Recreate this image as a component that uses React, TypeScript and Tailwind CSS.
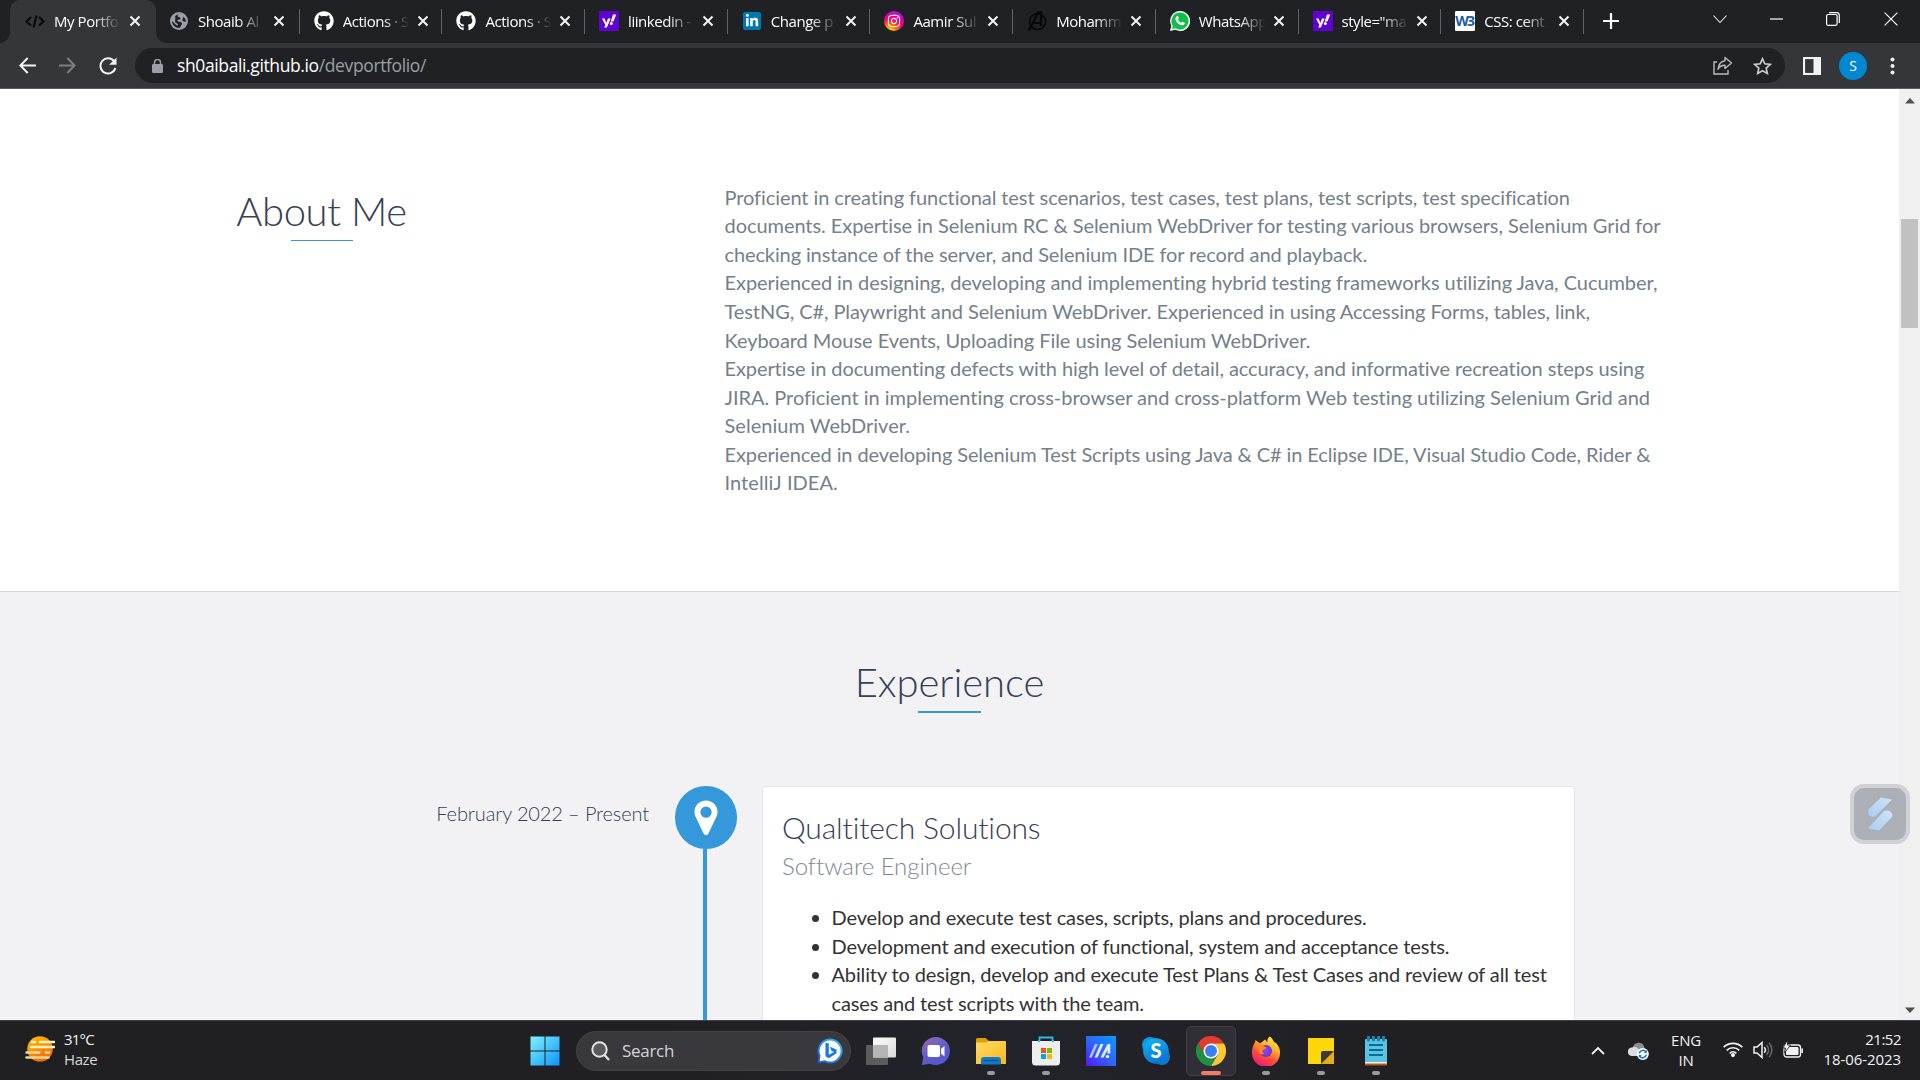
import React from "react";
import { FaGithub, FaInstagram, FaLinkedinIn } from "react-icons/fa";

const CloseX = () => (
  <svg width="12" height="12" viewBox="0 0 12 12" className="shrink-0">
    <path d="M1.5 1.5l9 9M10.5 1.5l-9 9" stroke="#f1f3f4" strokeWidth="2" />
  </svg>
);

const CodeFav = () => (
  <svg width="20" height="20" viewBox="0 0 20 20" fill="none" stroke="#0b0b0c" strokeWidth="2.200">
    <path d="M6 6L1.5 10.5 6 14.500M14 6l4.500 4.500L14 14.500M11.500 4.500l-3 12" />
  </svg>
);

const GlobeFav = () => (
  <svg width="18" height="18" viewBox="0 0 18 18">
    <circle cx="9" cy="9" r="9" fill="#9aa0a6" />
    <path d="M9.500 2c-2 .6-2.300 1.600-1.700 2.400.7.900 2.200.6 2.700 1.700.4 1.200-1 1.700-2.200 1.700-1.400 0-1.200 1.400-.3 1.700 1.400.4 3.400.2 3.900 1.600.5 1.500-.9 2.300-1.300 3.400-.2.700-.7 1.500-1.400 1.500-3.900-.1-7.200-3.100-7.200-7l4.500 4.300c.5.500 1.600.2 1.500-.7-.2-1.400-2.300-1.400-2.800-2.700C4.700 8 6 6 5 4.500 6.100 3 7.800 2 9.500 2zM13 4.500c1.700 1 3 3 2.900 5-1.300.4-2.900 0-3.500-1.300-.5-1.300 1.500-2.200.6-3.700z" fill="#202124" />
  </svg>
);

const YahooFav = () => (
  <svg width="20" height="20" viewBox="0 0 20 20">
    <rect width="20" height="20" fill="#6001d2" />
    <path d="M3 7.500h2.600L7.300 12 9 7.500h2.600L7.900 16.500H5.300l1.100-2.400z" fill="#fff" />
    <path d="M14 3.500h3.200l-2.700 7H11.700z" fill="#fff" />
    <circle cx="12.300" cy="12.600" r="1.500" fill="#fff" />
  </svg>
);

const LinkedinFav = () => (
  <div className="flex size-[18px] items-center justify-center rounded-[2px] bg-[#0077b5]">
    <FaLinkedinIn size={14} color="#fff" />
  </div>
);

const InstaFav = () => (
  <div className="flex size-5 items-center justify-center rounded-full bg-[radial-gradient(circle_at_28%_105%,#ffd600_8%,#ff7a00_28%,#ff0169_50%,#d300c5_72%,#7638fa_100%)]">
    <FaInstagram size={14} color="#fff" />
  </div>
);

const AvengersFav = () => (
  <svg width="20" height="20" viewBox="0 0 20 20" fill="none" stroke="#08080a">
    <circle cx="10.500" cy="10.500" r="8" strokeWidth="1.700" />
    <path d="M2 19.500L11 1.500h3V15" strokeWidth="2.400" />
    <path d="M7 12h8" strokeWidth="2" />
  </svg>
);

const WhatsappFav = () => (
  <svg width="20" height="20" viewBox="0 0 20 20">
    <path d="M10 0a10 10 0 11-4.600 18.800L0 20l1.300-5.200A10 10 0 0110 0z" fill="#f5f5f5" />
    <path d="M10 1.500A8.500 8.500 0 112.900 14.700l0 0-.9 3.400 3.500-.9A8.500 8.500 0 0110 1.500z" fill="#0ebd4a" />
    <path d="M6.700 5.300c.5-.5 1.200-.4 1.400.1l.7 1.600c.2.500-.4 1-.8 1.400.7 1.500 1.900 2.600 3.500 3.400.4-.4.900-1.100 1.400-.9l1.600.9c.5.300.3 1-.1 1.500-.7.900-1.700 1.200-2.800 1-3.100-.7-5.600-3-6.100-5.700-.2-1.300.3-2.500 1.200-3.300z" fill="#fff" />
  </svg>
);

const W3Fav = () => (
  <div className="flex size-5 items-center justify-center rounded-[1px] bg-white pr-[2px] font-['Open_Sans',sans-serif] text-[14px] leading-none font-bold tracking-[-1.800px] text-[#1c5d9e]">
    W3
  </div>
);

type Tab = { title: string; icon: React.ReactNode };
const tabs: Tab[] = [
  { title: "Shoaib Al", icon: <GlobeFav /> },
  { title: "Actions · S", icon: <FaGithub size={20} color="#fff" /> },
  { title: "Actions · S", icon: <FaGithub size={20} color="#fff" /> },
  { title: "liinkedin -", icon: <YahooFav /> },
  { title: "Change p", icon: <LinkedinFav /> },
  { title: "Aamir Sul", icon: <InstaFav /> },
  { title: "Mohamm", icon: <AvengersFav /> },
  { title: "WhatsApp", icon: <WhatsappFav /> },
  { title: 'style="ma', icon: <YahooFav /> },
  { title: "CSS: cent", icon: <W3Fav /> },
];

const TabTitle = ({ children }: { children: React.ReactNode }) => (
  <span className="ml-[9px] w-[68px] text-[15px] leading-5 tracking-[-0.45px] whitespace-nowrap text-white [mask-image:linear-gradient(to_right,black_58%,transparent_98%)]">
    {children}
  </span>
);

function TabStrip() {
  return (
    <div className="flex h-[43px] shrink-0 bg-[#202124]">
      <div className="relative ml-[10px] flex h-[43px] w-[145.500px] items-center rounded-t-[10px] bg-[#35363a] pb-[2px] pl-[15px]">
        <div className="absolute bottom-0 -left-[10px] size-[10px] bg-[radial-gradient(circle_at_0_0,#202124_9.500px,#35363a_10px)]" />
        <div className="absolute -right-[10px] bottom-0 size-[10px] bg-[radial-gradient(circle_at_100%_0,#202124_9.500px,#35363a_10px)]" />
        <div className="flex w-5 justify-center"><CodeFav /></div>
        <TabTitle>My Portfo</TabTitle>
        <span className="ml-[7px]"><CloseX /></span>
      </div>
      <div className="ml-[1.500px] flex">
        {tabs.map((t, i) => (
          <div key={i} className={i === 0 ? "flex w-[142.700px] shrink-0 items-center pb-[2px] pl-[12px]" : "flex w-[142.700px] shrink-0 items-center pb-[2px] pl-[14px]"}>
            <div className="flex w-5 shrink-0 justify-center">{t.icon}</div>
            <TabTitle>{t.title}</TabTitle>
            <span className={i === 0 ? "ml-[7px]" : "ml-[6px]"}><CloseX /></span>
            <span className="mt-[2px] ml-auto h-[25px] w-px bg-[#5f6368]" />
          </div>
        ))}
      </div>
      <div className="ml-[19px] flex items-center pb-[1px]">
        <svg width="16" height="16" viewBox="0 0 16 16"><path d="M8 0v16M0 8h16" stroke="#fff" strokeWidth="2.200" /></svg>
      </div>
      <div className="ml-auto flex h-[37px] items-center text-white">
        <svg className="mr-[43px]" width="14" height="10" viewBox="0 0 14 10" fill="none" stroke="#e8eaed" strokeWidth="1.100"><path d="M.5 1.500L7 8.500l6.500-7" /></svg>
        <svg className="mr-[43px]" width="13" height="2"><path d="M0 1h13" stroke="#fff" strokeWidth="1.200" /></svg>
        <svg className="mr-[44px]" width="14" height="14" viewBox="0 0 14 14" fill="none" stroke="#fff" strokeWidth="1.200">
          <rect x=".6" y="2.500" width="10.500" height="10.800" rx="1.500" />
          <path d="M3 .7h7.500a2.800 2.800 0 012.800 2.800V11" />
        </svg>
        <svg className="mr-[22px]" width="14" height="14" viewBox="0 0 14 14" stroke="#fff" strokeWidth="1.200"><path d="M.6.6l12.800 12.800M13.400.6L.6 13.400" /></svg>
      </div>
    </div>
  );
}

function Toolbar() {
  return (
    <div className="flex h-[46px] shrink-0 items-center border-b border-[#5c5d60] bg-[#35363a]">
      <svg className="ml-[19px]" width="17" height="17" viewBox="0 0 17 17" fill="none" stroke="#f1f3f4" strokeWidth="2"><path d="M17 8.500H1.500M8.700 1L1.300 8.500l7.400 7.500" /></svg>
      <svg className="ml-[23px]" width="17" height="17" viewBox="0 0 17 17" fill="none" stroke="#7d7e82" strokeWidth="2"><path d="M0 8.500h15.500M8.300 1l7.400 7.500-7.400 7.500" /></svg>
      <svg className="ml-[23px]" width="18" height="18" viewBox="0 0 18 18" fill="none"><path d="M15.200 4.400A7.600 7.600 0 1016.400 11" stroke="#f1f3f4" strokeWidth="2" /><path d="M17.500.5v7.300h-7.300z" fill="#f1f3f4" /></svg>
      <div className="ml-[18px] flex h-[35px] w-[1650px] items-center rounded-full bg-[#202124] pr-[13px] pl-[17px]">
        <svg width="11" height="14" viewBox="0 0 11 14"><rect y="5" width="11" height="9" rx="1.200" fill="#9aa0a6" /><path d="M2.500 6V3.500a3 3 0 016 0V6" fill="none" stroke="#9aa0a6" strokeWidth="1.500" /></svg>
        <span className="ml-[14px] text-[17.500px] tracking-[-0.380px] text-white">sh0aibali.github.io<span className="text-[#9aa0a6]">/devportfolio/</span></span>
        <svg className="ml-auto" width="20" height="19" viewBox="0 0 20 19" fill="none" stroke="#b9bbbe" strokeWidth="1.400">
          <path d="M4 6H1v12h14v-4" />
          <path d="M12 1.500l6.500 5.500-6.500 5.500V9.300c-3.500 0-5.500 1-7 4C5.500 9 8 5.300 12 4.800z" strokeLinejoin="round" />
        </svg>
        <svg className="ml-[20px]" width="19" height="18" viewBox="0 0 19 18" fill="none" stroke="#c9cbce" strokeWidth="1.700"><path d="M9.500 1.800l2.300 5 5.400.6-4 3.700 1.100 5.300-4.800-2.700-4.800 2.700 1.100-5.300-4-3.700 5.400-.6z" /></svg>
      </div>
      <svg className="ml-[18px]" width="18" height="18"><rect x="1" y="1" width="16" height="16" fill="none" stroke="#f1f3f4" strokeWidth="2.200" /><rect x="10.500" width="7.500" height="18" fill="#f1f3f4" /></svg>
      <div className="ml-[18px] flex size-[28px] items-center justify-center rounded-full bg-[#0288d1] text-[14px] text-white">S</div>
      <svg className="ml-[23px]" width="5" height="18" fill="#f1f3f4"><circle cx="2.500" cy="2.500" r="2" /><circle cx="2.500" cy="9" r="2" /><circle cx="2.500" cy="15.500" r="2" /></svg>
    </div>
  );
}

const aboutLines = [
  { text: "Proficient in creating functional test scenarios, test cases, test plans, test scripts, test specification", cls: "tracking-[-0.078px]" },
  { text: "documents. Expertise in Selenium RC & Selenium WebDriver for testing various browsers, Selenium Grid for", cls: "tracking-[-0.06px]" },
  { text: "checking instance of the server, and Selenium IDE for record and playback.", cls: "tracking-[-0.115px]" },
  { text: "Experienced in designing, developing and implementing hybrid testing frameworks utilizing Java, Cucumber,", cls: "tracking-[-0.06px]" },
  { text: "TestNG, C#, Playwright and Selenium WebDriver. Experienced in using Accessing Forms, tables, link,", cls: "tracking-[-0.078px]" },
  { text: "Keyboard Mouse Events, Uploading File using Selenium WebDriver.", cls: "tracking-[-0.05px]" },
  { text: "Expertise in documenting defects with high level of detail, accuracy, and informative recreation steps using", cls: "tracking-[-0.09px]" },
  { text: "JIRA. Proficient in implementing cross-browser and cross-platform Web testing utilizing Selenium Grid and", cls: "tracking-[-0.028px]" },
  { text: "Selenium WebDriver.", cls: "tracking-[0.03px]" },
  { text: "Experienced in developing Selenium Test Scripts using Java & C# in Eclipse IDE, Visual Studio Code, Rider &", cls: "tracking-[-0.1px]" },
  { text: "IntelliJ IDEA.", cls: "tracking-[0.06px]" },
];

const duties = [
  ["Develop and execute test cases, scripts, plans and procedures."],
  ["Development and execution of functional, system and acceptance tests."],
  ["Ability to design, develop and execute Test Plans & Test Cases and review of all test", "cases and test scripts with the team."],
];

function Page() {
  return (
    <div className="flex w-[1899px] flex-col overflow-hidden bg-white font-['Lato',sans-serif]">
      <section className="flex h-[502px] shrink-0 pl-[237px]">
        <div className="w-[487.500px] shrink-0 pt-[99.500px]">
          <div className="flex w-[169px] flex-col items-center">
            <h2 className="text-[40px] leading-[44px] font-light tracking-[-0.400px] whitespace-nowrap text-[#374054]">About Me</h2>
            <div className="mt-[7.500px] h-px w-[62px] bg-[#3498db]" />
          </div>
        </div>
        <div className="pt-[93.800px] text-[20px] leading-[28.570px] whitespace-nowrap text-[#74808a]">
          {aboutLines.map((l) => <p key={l.text} className={l.cls}>{l.text}</p>)}
        </div>
      </section>
      <section className="flex h-[429px] shrink-0 flex-col overflow-hidden border-t border-[#d7d7da] bg-[#f2f2f5]">
        <div className="flex flex-col items-center pt-[67.500px]">
          <h2 className="text-[40px] leading-[44px] font-light tracking-[-0.050px] text-[#374054]">Experience</h2>
          <div className="mt-[7.500px] h-[2px] w-[63px] bg-[#3498db]" />
        </div>
        <div className="mt-[73px] flex">
          <div className="w-[649px] pt-[13px] text-right text-[20px] leading-[28px] font-light tracking-[-0.120px] text-[#374054]">February 2022 – Present</div>
          <div className="ml-[26px] flex w-[62px] flex-col items-center">
            <div className="flex h-[63px] w-[62px] shrink-0 items-center justify-center rounded-full bg-[#3498db] pt-[1px]">
              <svg width="24" height="36" viewBox="0 0 24 36"><path fillRule="evenodd" d="M12 .5C5.500.5.500 5.500.5 11.700c0 2 .5 3.600 1.200 5.300l8 16.700c.9 1.900 3.700 1.900 4.600 0l8-16.700c.8-1.700 1.200-3.300 1.200-5.300C23.500 5.500 18.500.5 12 .5zM12 6.500a5.600 5.600 0 100 11.300 5.600 5.600 0 000-11.300z" fill="#fff" /></svg>
            </div>
            <div className="mr-[2px] h-[200px] w-1 bg-[#3498db]" />
          </div>
          <div className="ml-[25px] w-[813px] rounded-[3px] border border-[#e4e5e8] bg-white pt-[21.500px] pl-[19px]">
            <h3 className="text-[30px] leading-[36px] font-light tracking-[-0.150px] text-[#374054]">Qualtitech Solutions</h3>
            <h4 className="mt-[6px] text-[24px] leading-[30px] font-light tracking-[-0.040px] text-[#7e8890]">Software Engineer</h4>
            <ul className="mt-[22.500px] list-disc pl-[49.500px] text-[20px] leading-[28.570px] tracking-[-0.130px] whitespace-nowrap text-[#333]">
              {duties.map((d) => (
                <li key={d[0]}>{d.map((l) => <div key={l} className="first:inline-block">{l}</div>)}</li>
              ))}
            </ul>
          </div>
        </div>
      </section>
    </div>
  );
}

function Scrollbar() {
  return (
    <div className="flex w-[21px] flex-col items-center bg-[#f0f0f0]">
      <svg className="mt-[9px]" width="10" height="6"><path d="M0 5.500L5 0l5 5.500z" fill="#505050" /></svg>
      <div className="mt-[115px] h-[109px] w-[17px] bg-[#c1c1c1]" />
      <svg className="mt-auto mb-[7px]" width="10" height="6"><path d="M0 .5L5 6l5-5.500z" fill="#505050" /></svg>
    </div>
  );
}

const TaskViewIcon = () => (
  <svg width="30" height="30" viewBox="0 0 30 30">
    <defs><linearGradient id="tv" x1="0" y1="0" x2="1" y2="1"><stop stopColor="#fff" /><stop offset="1" stopColor="#d9d9d9" /></linearGradient></defs>
    <rect y="9" width="22" height="20" rx="1" fill="#5c5c5e" />
    <rect x="7" y="1.500" width="23" height="20" rx="1" fill="url(#tv)" />
    <path d="M7 9h15v12.500H7z" fill="#b5b5b6" />
  </svg>
);
const ChatIcon = () => (
  <svg width="30" height="30" viewBox="0 0 30 30">
    <defs><linearGradient id="ch" x1="0" y1="0" x2=".6" y2="1"><stop stopColor="#9a6ba8" /><stop offset=".6" stopColor="#5f5cc9" /><stop offset="1" stopColor="#5558d0" /></linearGradient></defs>
    <path d="M15 1a14 14 0 11-6 26.700L.8 29l1.500-7.500A14 14 0 0115 1z" fill="url(#ch)" />
    <rect x="6.500" y="9" width="12.500" height="12" rx="2" fill="#fff" />
    <path d="M20 13l3.500-3v10.500L20 17.500z" fill="#fff" />
  </svg>
);
const FolderIcon = () => (
  <svg width="30" height="30" viewBox="0 0 30 30">
    <defs><linearGradient id="fo" x1="0" y1="0" x2="1" y2="1"><stop stopColor="#ffd966" /><stop offset="1" stopColor="#fbb91b" /></linearGradient></defs>
    <path d="M0 3.500A1.500 1.500 0 011.500 2h8L13 5h15a2 2 0 012 2v8H0z" fill="#dfa000" />
    <path d="M0 6.500h10L13 5h16a1 1 0 011 1v22H0z" fill="url(#fo)" />
    <path d="M5 28.500V24a3 3 0 013-3h14a3 3 0 013 3v4.500z" fill="#1178c9" />
    <path d="M8 24.500h14" stroke="#0a4d91" strokeWidth="1.200" />
  </svg>
);
const StoreIcon = () => (
  <svg width="30" height="30" viewBox="0 0 30 30">
    <path d="M8.500 6V1.500h13V6" fill="none" stroke="#28b9ee" strokeWidth="1.800" />
    <path d="M1 5h28v21a3.500 3.500 0 01-3.500 3.500h-21A3.500 3.500 0 011 26z" fill="#ededed" />
    <path d="M8 6V4M22 6V4" stroke="#28b9ee" strokeWidth="2" />
    <path d="M10 12h5v5h-5z" fill="#f25022" /><path d="M16 12h5v5h-5z" fill="#7fba00" />
    <path d="M10 18h5v5h-5z" fill="#00a4ef" /><path d="M16 18h5v5h-5z" fill="#ffb900" />
  </svg>
);
const MyAsusIcon = () => (
  <svg width="30" height="30" viewBox="0 0 30 30">
    <defs><linearGradient id="ma" x1="0" y1="1" x2="1" y2="0"><stop stopColor="#5a16f2" /><stop offset=".5" stopColor="#2c68fa" /><stop offset="1" stopColor="#0a9bff" /></linearGradient></defs>
    <rect width="30" height="30" fill="url(#ma)" />
    <path d="M3 21.500L9 8h2.800L5.800 21.500z" fill="#a9c4fb" />
    <path d="M8.500 21.500L14.500 8h3L11.500 21.500z" fill="#dfeaff" />
    <path d="M14.500 21.500L21.500 8h2.800v9.500h-2.800V14l-4 7.500z" fill="#dfeaff" />
    <circle cx="21.500" cy="20.500" r="1.600" fill="#fff" />
  </svg>
);
const SkypeIcon = () => (
  <svg width="30" height="30" viewBox="0 0 30 30">
    <defs><linearGradient id="sk" x1="0" y1="0" x2=".4" y2="1"><stop stopColor="#16b6f3" /><stop offset="1" stopColor="#0a78d4" /></linearGradient></defs>
    <circle cx="9" cy="9" r="8" fill="#0d98e4" /><circle cx="21" cy="21" r="8" fill="#0b7bd2" />
    <circle cx="15" cy="15" r="12.800" fill="url(#sk)" />
    <text x="15" y="22" textAnchor="middle" fontFamily="Lato" fontWeight="900" fontSize="20" fill="#fff">S</text>
  </svg>
);
const ChromeIcon = () => (
  <svg width="30" height="30" viewBox="0 0 30 30">
    <path d="M2 7.500A15 15 0 0128 7.500H15L8.500 18.750z" fill="#e33b2e" />
    <path d="M28 7.500A15 15 0 0115 30l6.500-11.250L21.500 11.250 15 7.500z" fill="#fcc934" />
    <path d="M15 30A15 15 0 012 7.500l6.500 11.250L15 22.500l6.500-3.750z" fill="#1e9044" />
    <circle cx="15" cy="15" r="7.500" fill="#fff" /><circle cx="15" cy="15" r="6" fill="#3b7ef2" />
  </svg>
);
const FirefoxIcon = () => (
  <svg width="30" height="30" viewBox="0 0 30 30">
    <defs>
      <linearGradient id="ff" x1=".8" y1="0" x2=".3" y2="1"><stop stopColor="#fff14a" /><stop offset=".35" stopColor="#ffb02a" /><stop offset=".65" stopColor="#ff4f3c" /><stop offset="1" stopColor="#f0147a" /></linearGradient>
      <radialGradient id="fg"><stop stopColor="#8a4bea" /><stop offset="1" stopColor="#6a35c9" /></radialGradient>
    </defs>
    <path d="M18.500.5c2 1 3.500 3 4.500 5.500l2 1c3 3 4.200 6.500 4 10A14 14 0 011 17C.7 13 2 9 4 6.500L4.500 4l4 3 2-.5C12 5 13 4 14.500 3.500c.3 1 .5 2 2 2.500C16 4 17 2 18.500.5z" fill="url(#ff)" />
    <circle cx="15" cy="15" r="6" fill="url(#fg)" />
    <path d="M4 7c4-1 7 1 8 3l3.500 1.500c-.5 1.800-3 1.500-4 3-.5 2 1 3 2.500 3.500-4 1-6-1-6.500-3.500-1.500-2.500-3-4-3.500-7.500z" fill="#ff8a2a" />
  </svg>
);
const StickyIcon = () => (
  <svg width="30" height="30" viewBox="0 0 30 30">
    <path d="M2 2h26v14L16 28H2z" fill="#ffd60a" />
    <path d="M28 15v13H15z" fill="#e9ac12" />
    <path d="M28 15H17a2 2 0 00-2 2v11z" fill="#3b3a3c" />
  </svg>
);
const NotepadIcon = () => (
  <svg width="30" height="30" viewBox="0 0 30 30">
    <path d="M4 26h22v3.500H4z" fill="#b85a12" /><path d="M4 25h22v2.500H4z" fill="#f2f2f2" />
    <path d="M5 3h20a1 1 0 011 1v22H4V4a1 1 0 011-1z" fill="#59c4e2" />
    <path d="M8 9h14M8 14h14M8 19h14" stroke="#0b6a93" strokeWidth="1.900" />
    <path d="M7.500 1v3M12.500 1v3M17.500 1v3M22.500 1v3" stroke="#1785ad" strokeWidth="3" strokeLinecap="round" />
  </svg>
);

const apps: { icon: React.ReactNode; run?: boolean; active?: boolean }[] = [
  { icon: <TaskViewIcon /> },
  { icon: <ChatIcon /> },
  { icon: <FolderIcon />, run: true },
  { icon: <StoreIcon />, run: true },
  { icon: <MyAsusIcon /> },
  { icon: <SkypeIcon /> },
  { icon: <ChromeIcon />, active: true },
  { icon: <FirefoxIcon />, run: true },
  { icon: <StickyIcon />, run: true },
  { icon: <NotepadIcon />, run: true },
];

function Taskbar() {
  return (
    <div className="flex h-[60px] shrink-0 items-center border-t border-[#414246] bg-[linear-gradient(to_right,#202022,#202024_35%,#22222a_52%,#202022_78%)] text-[15px] leading-5 text-[#f2f2f2]">
      <div className="flex w-[529.500px] items-center pl-[25px]">
        <svg width="30" height="28" viewBox="0 0 30 28" className="-mt-[3px]">
          <defs><linearGradient id="wz" x1="0" y1="0" x2=".5" y2="1"><stop stopColor="#ffc400" /><stop offset="1" stopColor="#ee6a0b" /></linearGradient></defs>
          <circle cx="15" cy="14" r="12.800" fill="url(#wz)" />
          <path d="M7 7h3M15 7h14M6 12h23" stroke="#ffefc4" strokeWidth="2.600" strokeLinecap="round" />
          <path d="M1.500 17.500h13M21 17.500h3M1.500 22.500h22" stroke="#f0d594" strokeWidth="2.600" strokeLinecap="round" />
        </svg>
        <div className="-mt-[4px] ml-[9px] tracking-[-0.800px]"><div>31°C</div><div className="tracking-[-0.400px] text-[#d5d5d6]">Haze</div></div>
      </div>
      <svg width="30" height="30" viewBox="0 0 30 30">
        <defs><linearGradient id="wn" x1="0" y1="0" x2="1" y2="1"><stop stopColor="#80f2ff" /><stop offset="1" stopColor="#0a95fb" /></linearGradient></defs>
        <path d="M.5.500h14v14H.500zM15.500.500h14v14h-14zM.500 15.500h14v14H.500zM15.500 15.500h14v14h-14z" fill="url(#wn)" />
      </svg>
      <div className="ml-[16.500px] flex h-10 w-[275px] items-center rounded-full border border-[#434247] bg-[#39383d] pr-[7px] pl-[14px]">
        <svg width="19" height="20" viewBox="0 0 19 20" fill="none" stroke="#e4e4e6"><circle cx="8.500" cy="8.500" r="7.200" strokeWidth="2" fill="#5a5a5e" /><path d="M13.500 14l4.500 5" strokeWidth="2.300" /></svg>
        <span className="ml-[12px] text-[17px] tracking-[-0.300px] text-[#d4d4d6]">Search</span>
        <svg className="ml-auto" width="26" height="26" viewBox="0 0 26 26">
          <defs><linearGradient id="bg" x1="1" y1="0" x2="0" y2="1"><stop stopColor="#2cc4f4" /><stop offset="1" stopColor="#1654e0" /></linearGradient></defs>
          <path d="M13 .5A12.500 12.500 0 117.500 24.200L.7 25.500 1.500 18A12.500 12.500 0 0113 .5z" fill="url(#bg)" />
          <path d="M13 2.500A10.500 10.500 0 118 22.200L2.700 23.300 3.500 17.500A10.500 10.500 0 0113 2.500z" fill="#fff" />
          <path d="M8.500 4.500l3.300 1.200v11L17 14l-2.600-1.300-1.600-3.900 6.700 2.700v3.700l-7.700 5-3.300-2z" fill="#1877e8" />
        </svg>
      </div>
      <div className="ml-[2px] flex">
        {apps.map((a, i) => (
          <div key={i} className="flex w-[55px] justify-center">
            <div className={a.active ? "flex h-[50px] w-[50px] flex-col items-center rounded-[5px] border border-[#414047] bg-[#302f36] pt-[9px]" : "flex h-[50px] w-[50px] flex-col items-center pt-[10px]"}>
              {a.icon}
              {a.active && <span className="mt-[5px] h-1 w-5 rounded-full bg-[#f37c66]" />}
              {a.run && <span className="mt-[5px] h-1 w-2 rounded-full bg-[#9b9b9e]" />}
            </div>
          </div>
        ))}
      </div>
      <div className="ml-auto flex items-center">
        <svg width="14" height="9" viewBox="0 0 14 9" fill="none" stroke="#f2f2f2" strokeWidth="1.800"><path d="M1 8l6-6 6 6" /></svg>
        <svg className="ml-[23px]" width="21" height="18" viewBox="0 0 21 18">
          <path d="M5 5a6 6 0 0111-1l1 5H5z" fill="#8d8d8f" /><path d="M4 14a4 4 0 010-8.500 5 5 0 016 1l5 7.500z" fill="#dcdcdc" />
          <circle cx="14.800" cy="12" r="6" fill="#fff" /><path d="M11.300 11.500a3.600 3.600 0 016.500-1.700M18.300 12.500a3.600 3.600 0 01-6.500 1.700" fill="none" stroke="#1674c9" strokeWidth="1.500" /><path d="M18.800 8v3h-3zM10.800 16v-3h3z" fill="#1674c9" />
        </svg>
        <div className="-mt-[2px] ml-[21px] w-[32px] text-center tracking-[-0.200px]"><div>ENG</div><div>IN</div></div>
        <svg className="-mt-[2px] ml-[21px]" width="20" height="15" viewBox="0 0 20 15" fill="none" stroke="#f2f2f2" strokeWidth="1.700"><path d="M.7 5.200a13.200 13.200 0 0118.600 0M3.700 8.300a9 9 0 0112.600 0M6.700 11.300a4.700 4.700 0 016.600 0" /><circle cx="10" cy="13" r="1.200" fill="#f2f2f2" /></svg>
        <svg className="-mt-[1px] ml-[10px]" width="20" height="18" viewBox="0 0 20 18" fill="none" strokeWidth="1.500"><path d="M1 6h3l5-4.500v15L4 12H1z" stroke="#f2f2f2" /><path d="M11.200 6.300a4 4 0 010 5.400" stroke="#f2f2f2" /><path d="M13.500 4a7.200 7.200 0 010 10M16 1.800a10.500 10.500 0 010 14.400" stroke="#68686a" /></svg>
        <svg className="-mt-[2px] ml-[10px] overflow-visible" width="20" height="18" viewBox="0 0 20 18"><rect x="1" y="4" width="16.500" height="12" rx="2.500" fill="none" stroke="#f2f2f2" strokeWidth="1.300" /><rect x="3" y="6" width="12.500" height="8" rx="1" fill="#f2f2f2" /><path d="M18.300 7.500h1.700v4.500h-1.700z" fill="#f2f2f2" /><path d="M4.500-1L0 7h2.500L1.500 12 7.500 4H4.500z" fill="#f2f2f2" stroke="#202022" strokeWidth=".8" /></svg>
        <div className="-mt-[4px] mr-[19px] ml-[17px] w-[81px] text-right whitespace-nowrap"><div className="tracking-[-0.500px]">21:52</div><div className="tracking-[-0.080px]">18-06-2023</div></div>
      </div>
    </div>
  );
}

export default function App() {
  return (
    <div className="relative flex h-[1080px] w-[1920px] flex-col overflow-hidden font-['Open_Sans','Noto_Sans',sans-serif]">
      <TabStrip />
      <Toolbar />
      <div className="flex h-[931px] shrink-0">
        <Page />
        <Scrollbar />
      </div>
      <Taskbar />
      <div className="absolute top-[784px] left-[1850px] flex size-[60px] items-center justify-center rounded-[14px] border-4 border-[#d0d1d6] bg-[#adafb6]">
        <svg width="26" height="34" viewBox="0 0 26 34">
          <defs><linearGradient id="fl" x1="0" y1="1" x2="1" y2="0"><stop stopColor="#a9cdf3" /><stop offset="1" stopColor="#cfe2f8" /></linearGradient></defs>
          <path d="M14 .5L25 2.500 8 19.500C3 21 0 17 1.500 12.500z" fill="url(#fl)" />
          <path d="M12 33.500L1 31.500 17 14c5-2 9.500 1.500 8 6z" fill="url(#fl)" />
        </svg>
      </div>
    </div>
  );
}
